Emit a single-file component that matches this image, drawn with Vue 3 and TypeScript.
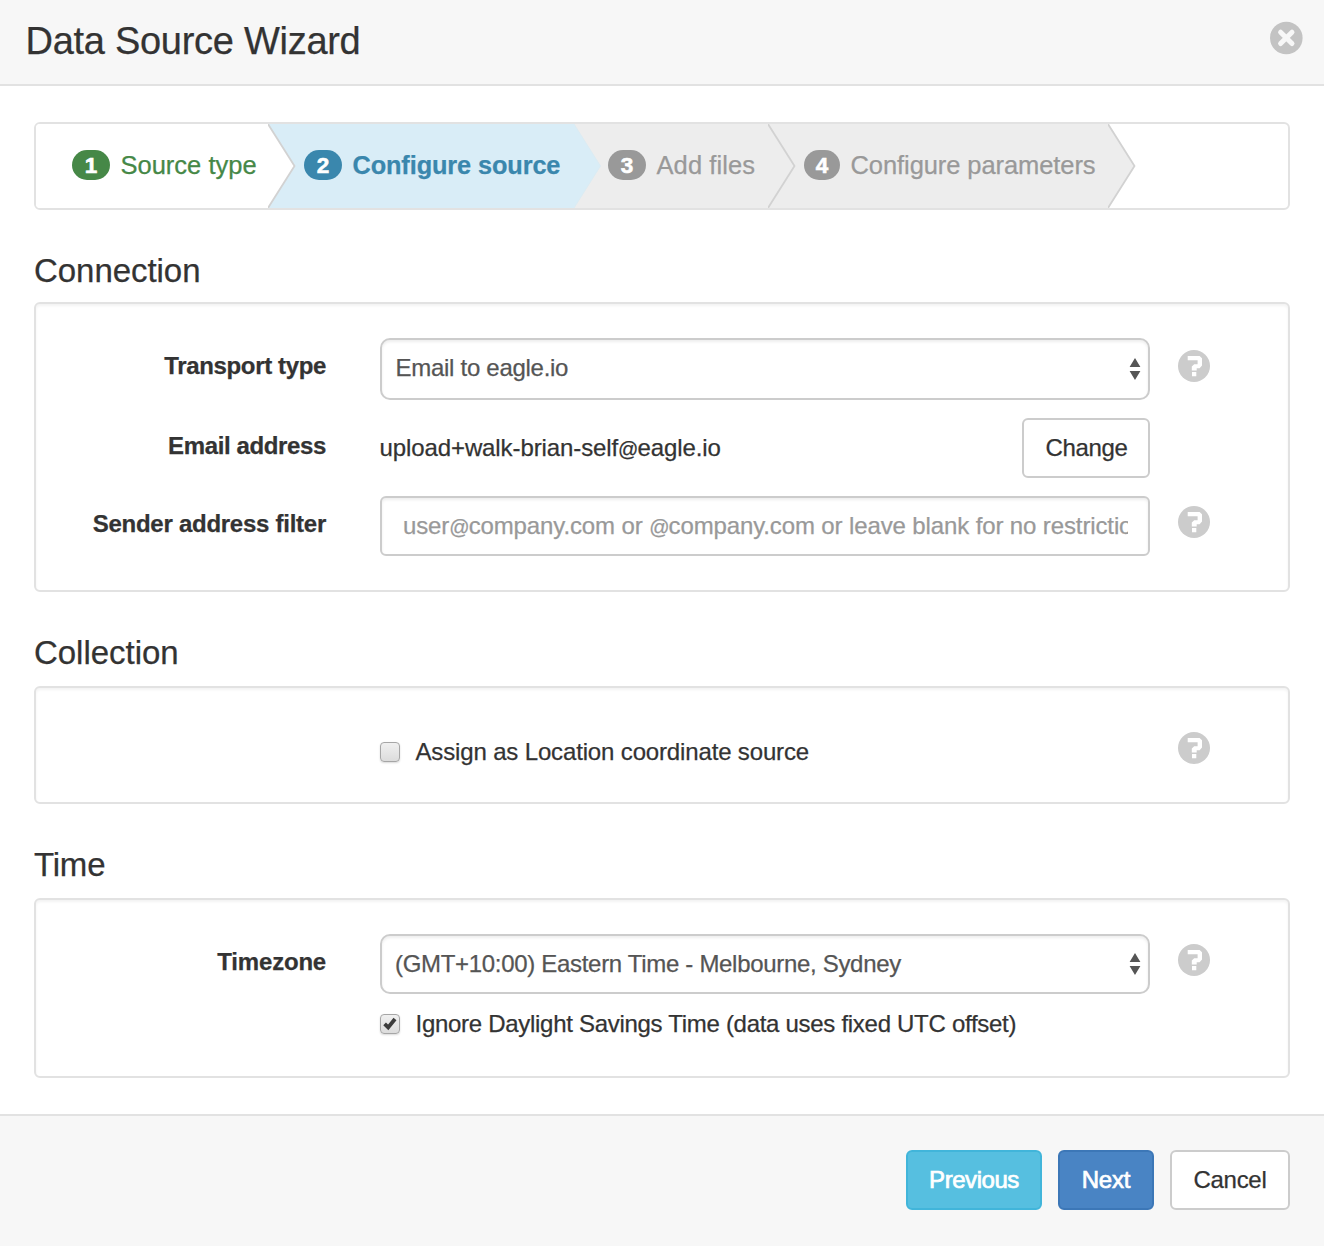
<script setup lang="ts">
import { ref } from 'vue'

interface Step {
  n: number
  label: string
  state: 'done' | 'active' | 'todo'
  width: number
  pad: number
  badge: number
  spacing: number
}

const steps: Step[] = [
  { n: 1, label: 'Source type', state: 'done', width: 232, pad: 36, badge: 38, spacing: 0 },
  { n: 2, label: 'Configure source', state: 'active', width: 306, pad: 36, badge: 38, spacing: -0.1 },
  { n: 3, label: 'Add files', state: 'todo', width: 194, pad: 34, badge: 38, spacing: 0.1 },
  { n: 4, label: 'Configure parameters', state: 'todo', width: 340, pad: 36, badge: 36, spacing: -0.08 },
]

const assignLocation = ref(false)
const ignoreDst = ref(true)
</script>

<template>
  <div class="wizard">
    <header class="header">
      <h1>Data Source Wizard</h1>
      <svg class="close" viewBox="0 0 34 34" width="34" height="34">
        <circle cx="17.3" cy="17" r="16.3" fill="#c3c3c3" />
        <path d="M11.6 11.2L23 22.6M23 11.2L11.6 22.6" stroke="#f7f7f7" stroke-width="5" stroke-linecap="round" />
      </svg>
    </header>

    <main class="body">
      <nav class="steps">
        <div
          v-for="s in steps"
          :key="s.n"
          class="step"
          :class="s.state"
          :style="{ width: s.width + 'px', paddingLeft: s.pad + 'px' }"
        >
          <span class="badge" :style="{ width: s.badge + 'px' }">{{ s.n }}</span>
          <span class="step-label" :style="{ letterSpacing: s.spacing + 'px' }">{{ s.label }}</span>
          <svg class="chevron" width="29" height="84" viewBox="0 0 29 84">
            <path class="fill" d="M0 0L26.5 42L0 84Z" />
            <path class="edge" d="M0 0L26.5 42L0 84" fill="none" stroke-width="1.8" />
          </svg>
        </div>
      </nav>

      <h2 class="t-connection">Connection</h2>
      <section class="panel connection">
        <div class="row r1">
          <label class="label transport">Transport type</label>
          <div class="select tall">
            <span class="value to-eagle">Email to eagle.io</span>
            <svg class="arrows" width="12" height="22" viewBox="0 0 12 22">
              <path d="M6 0L11.4 9H.6ZM.6 13H11.4L6 22Z" fill="#555" />
            </svg>
          </div>
          <svg class="help low" viewBox="0 0 32 32" width="32" height="32">
            <circle cx="16" cy="16" r="16" fill="#ccc" />
            <path d="M9.7 6H21.6L24 8.3V15.4L21.6 18.2H18.7V20.4H13.8V16.6L16.2 14.2H19.6V10.3H9.7ZM14 22H18.3V26.2H14Z" fill="#fff" />
          </svg>
        </div>
        <div class="row r2">
          <label class="label email">Email address</label>
          <div class="address">
            <span class="mail">upload+walk-brian-self<span class="at">@</span>eagle.io</span>
            <button class="btn change" type="button">Change</button>
          </div>
        </div>
        <div class="row r3">
          <label class="label sender">Sender address filter</label>
          <div class="input">
            <div class="placeholder">user<span class="at">@</span>company.com or <span class="at">@</span>company.com or leave blank for no restrictions</div>
          </div>
          <svg class="help" viewBox="0 0 32 32" width="32" height="32">
            <circle cx="16" cy="16" r="16" fill="#ccc" />
            <path d="M9.7 6H21.6L24 8.3V15.4L21.6 18.2H18.7V20.4H13.8V16.6L16.2 14.2H19.6V10.3H9.7ZM14 22H18.3V26.2H14Z" fill="#fff" />
          </svg>
        </div>
      </section>

      <h2 class="t-collection">Collection</h2>
      <section class="panel collection">
        <div class="row">
          <label class="label"></label>
          <div class="check-row first">
            <span class="check" @click="assignLocation = !assignLocation">
              <svg v-if="assignLocation" width="20" height="20" viewBox="0 0 20 20">
                <path d="M4.6 9.8L8.2 13.4L15 5" fill="none" stroke="#3c3c3c" stroke-width="3.8" />
              </svg>
            </span>
            <span class="assign">Assign as Location coordinate source</span>
          </div>
          <svg class="help" viewBox="0 0 32 32" width="32" height="32">
            <circle cx="16" cy="16" r="16" fill="#ccc" />
            <path d="M9.7 6H21.6L24 8.3V15.4L21.6 18.2H18.7V20.4H13.8V16.6L16.2 14.2H19.6V10.3H9.7ZM14 22H18.3V26.2H14Z" fill="#fff" />
          </svg>
        </div>
      </section>

      <h2 class="t-time">Time</h2>
      <section class="panel time">
        <div class="row">
          <label class="label zone">Timezone</label>
          <div class="stack">
            <div class="select">
              <span class="value gmt">(GMT+10:00) Eastern Time - Melbourne, Sydney</span>
              <svg class="arrows" width="12" height="22" viewBox="0 0 12 22">
                <path d="M6 0L11.4 9H.6ZM.6 13H11.4L6 22Z" fill="#555" />
              </svg>
            </div>
            <div class="check-row">
              <span class="check" @click="ignoreDst = !ignoreDst">
                <svg v-if="ignoreDst" width="20" height="20" viewBox="0 0 20 20">
                  <path d="M4.6 9.8L8.2 13.4L15 5" fill="none" stroke="#3c3c3c" stroke-width="3.8" />
                </svg>
              </span>
              <span class="ignore">Ignore Daylight Savings Time (data uses fixed UTC offset)</span>
            </div>
          </div>
          <svg class="help" viewBox="0 0 32 32" width="32" height="32">
            <circle cx="16" cy="16" r="16" fill="#ccc" />
            <path d="M9.7 6H21.6L24 8.3V15.4L21.6 18.2H18.7V20.4H13.8V16.6L16.2 14.2H19.6V10.3H9.7ZM14 22H18.3V26.2H14Z" fill="#fff" />
          </svg>
        </div>
      </section>
    </main>

    <footer class="footer">
      <button class="btn info" type="button">Previous</button>
      <button class="btn primary" type="button">Next</button>
      <button class="btn cancel" type="button">Cancel</button>
    </footer>
  </div>
</template>

<style>
body {
  background: #fff;
}
</style>

<style scoped>
.wizard,
.wizard * {
  box-sizing: border-box;
}
.wizard {
  display: flex;
  flex-direction: column;
  width: 1324px;
  height: 1246px;
  overflow: hidden;
  background: #fff;
  color: #333;
  font-family: 'Liberation Sans', Arial, sans-serif;
  font-size: 24px;
  -webkit-text-stroke: 0.25px currentColor;
}
.header {
  display: flex;
  justify-content: space-between;
  height: 86px;
  padding: 0 21px 0 25.5px;
  background: #f7f7f7;
  border-bottom: 2px solid #e2e2e2;
}
h1,
h2 {
  margin: 0;
  font-weight: 400;
  white-space: nowrap;
}
h1 {
  font-size: 38px;
  line-height: 82px;
  letter-spacing: -0.28px;
}
.close {
  margin-top: 21px;
}
.body {
  flex: none;
  height: 1028px;
  padding: 36px 34px 0;
}
.steps {
  display: flex;
  height: 88px;
  border: 2px solid #e2e2e2;
  border-radius: 6px;
}
.step {
  position: relative;
  flex: none;
  display: flex;
  align-items: center;
  height: 84px;
  color: #999;
  background: #ededed;
  font-size: 25.5px;
  white-space: nowrap;
}
.step:first-child {
  border-radius: 4px 0 0 4px;
}
.step-label {
  margin-left: 10.5px;
  line-height: 82px;
  margin-top: -2px;
}
.badge {
  flex: none;
  height: 30px;
  margin-top: -2px;
  border-radius: 15px;
  background: #999;
  color: #fff;
  font-size: 22.5px;
  font-weight: 700;
  line-height: 32px;
  text-align: center;
  -webkit-text-stroke: 0.6px #fff;
}
.step.done {
  color: #468847;
  background: #fff;
}
.done .badge {
  background: #468847;
}
.step.active {
  color: #3a87ad;
  background: #d9edf7;
  font-size: 25.3px;
  font-weight: 700;
}
.active .badge {
  background: #3a87ad;
}
.chevron {
  position: absolute;
  left: 100%;
  top: 0;
  z-index: 1;
}
.fill {
  fill: #ededed;
}
.edge {
  stroke: #d2d2d2;
}
.done .fill {
  fill: #fff;
}
.active .fill {
  fill: #d9edf7;
}
.active .edge {
  stroke: #dcebf2;
  stroke-width: 1;
}
h2 {
  height: 92px;
  padding-top: 38px;
  font-size: 33px;
  line-height: 46px;
}
.t-connection {
  letter-spacing: -0.05px;
}
.t-collection {
  height: 94px;
  letter-spacing: -0.03px;
}
.t-time {
  height: 94px;
  letter-spacing: -0.2px;
}
.panel {
  padding-top: 34px;
  border: 2px solid #e2e2e2;
  border-radius: 6px;
  box-shadow: inset 0 2px 3px rgba(0, 0, 0, 0.05);
}
.connection {
  height: 290px;
}
.collection {
  height: 118px;
}
.time {
  height: 180px;
}
.row {
  display: grid;
  grid-template-columns: 290px 770px 32px;
  column-gap: 54px;
  align-items: start;
}
.r1 {
  height: 80px;
}
.r2 {
  height: 78px;
}
.label {
  font-weight: 700;
  line-height: 56px;
  text-align: right;
  white-space: nowrap;
}
.transport {
  letter-spacing: -0.36px;
}
.email {
  letter-spacing: -0.37px;
}
.sender {
  letter-spacing: -0.26px;
}
.zone {
  letter-spacing: -0.2px;
}
.select {
  display: flex;
  align-items: center;
  justify-content: space-between;
  width: 770px;
  height: 60px;
  padding: 0 7px 0 13px;
  border: 2px solid #ccc;
  border-radius: 10px;
  color: #555;
  box-shadow: inset 0 2px 3px rgba(0, 0, 0, 0.07);
}
.tall {
  height: 62px;
}
.value {
  line-height: 56px;
}
.tall .value {
  margin-top: -2px;
}
.to-eagle {
  margin-left: 0.5px;
  letter-spacing: -0.28px;
}
.gmt {
  letter-spacing: -0.31px;
}
.help {
  margin-left: -26px;
  margin-top: 10px;
}
.low {
  margin-top: 12px;
}
.address {
  display: flex;
  justify-content: space-between;
  align-items: center;
  height: 60px;
}
.at {
  font-size: 20px;
  letter-spacing: -0.9px;
  line-height: 1;
}
.mail {
  margin-left: -0.5px;
  letter-spacing: -0.1px;
}
.input {
  height: 60px;
  padding: 0 20px 0 21px;
  border: 2px solid #ccc;
  border-radius: 6px;
  box-shadow: inset 0 2px 3px rgba(0, 0, 0, 0.07);
}
.placeholder {
  overflow: hidden;
  color: #999;
  line-height: 56px;
  letter-spacing: -0.12px;
  white-space: nowrap;
}
.check-row {
  display: flex;
  align-items: center;
  height: 60px;
  white-space: nowrap;
}
.check {
  flex: none;
  display: flex;
  width: 20px;
  height: 20px;
  margin-right: 15.5px;
  border: 1.5px solid #a6a6a6;
  border-radius: 4px;
  background: linear-gradient(#f0f0f0, #dcdcdc);
  box-shadow: 0 1px 2px rgba(0, 0, 0, 0.15);
}
.check svg {
  margin: -1px;
}
.assign {
  letter-spacing: -0.15px;
}
.ignore {
  letter-spacing: -0.29px;
}
.btn {
  height: 60px;
  padding: 0;
  border: 2px solid #ccc;
  border-radius: 6px;
  background: #fff;
  color: #333;
  font: 400 24px/56px 'Liberation Sans', Arial, sans-serif;
  -webkit-text-stroke: 0.25px currentColor;
}
.change {
  width: 128px;
  padding-left: 1px;
  letter-spacing: -0.35px;
}
.footer {
  flex: 1;
  display: flex;
  justify-content: flex-end;
  gap: 16px;
  padding: 34px 34px 0 0;
  background: #f7f7f7;
  border-top: 2px solid #e2e2e2;
}
.info {
  width: 136px;
  background: #56bfe0;
  border-color: #41b5da;
  color: #fff;
  letter-spacing: -0.45px;
  -webkit-text-stroke: 0.7px #fff;
}
.primary {
  width: 96px;
  background: #4984c4;
  border-color: #3c77b7;
  color: #fff;
  letter-spacing: -0.2px;
  -webkit-text-stroke: 0.7px #fff;
}
.cancel {
  width: 120px;
  letter-spacing: -0.3px;
}
</style>
